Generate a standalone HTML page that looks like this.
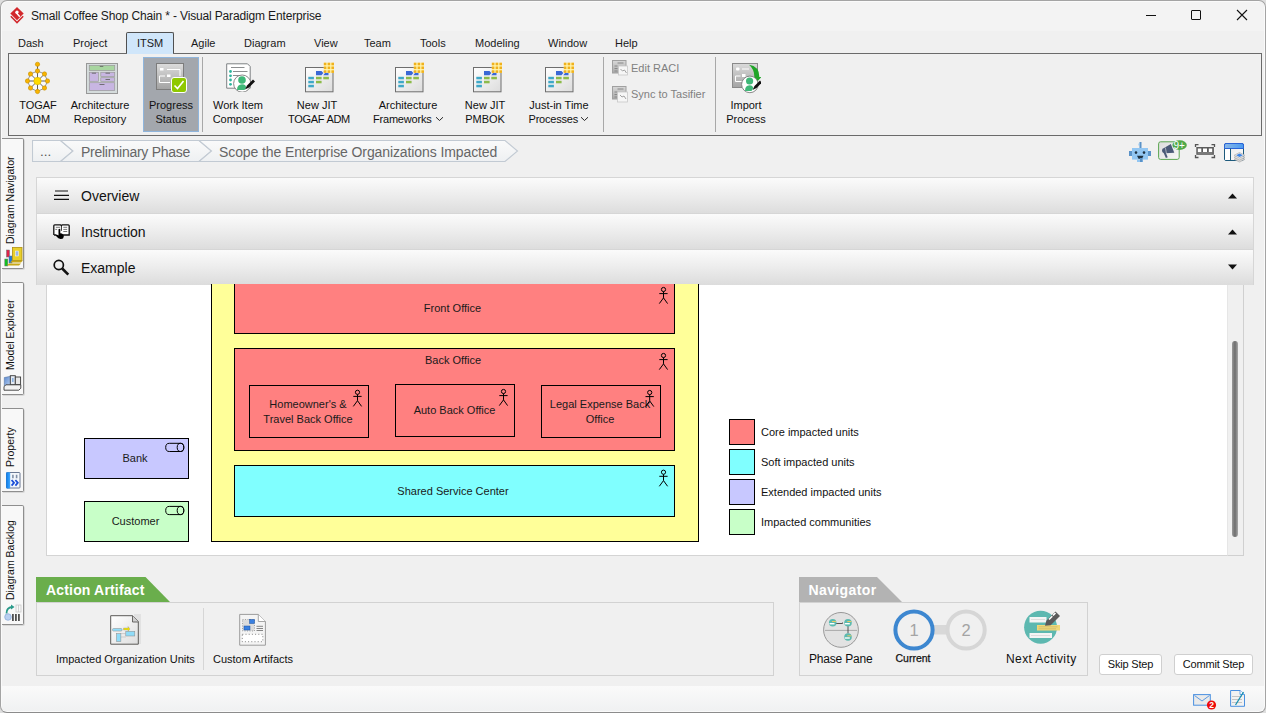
<!DOCTYPE html>
<html><head><meta charset="utf-8">
<style>
*{box-sizing:border-box;margin:0;padding:0}
html,body{width:1266px;height:713px;overflow:hidden;background:#dedede}
body{font-family:"Liberation Sans",sans-serif;font-size:11px;color:#000;position:relative}
.a{position:absolute}
.t{position:absolute;white-space:nowrap;line-height:14px}
.c{text-align:center}
#win{left:0;top:0;width:1266px;height:713px;background:#f0f0f0;border:1px solid #a4a4a4;border-bottom-color:#8c8c8c;border-radius:7px;box-shadow:inset 1px 1px 0 #fafafa,inset -1px -1px 0 #fafafa}
#title{left:2px;top:2px;width:1262px;height:29px;background:#f3f3f3;border-radius:6px 6px 0 0}
.menu{top:36px;font-size:11px;color:#1a1a1a}
.rl{font-size:11px;color:#111;text-align:center;line-height:14px}
.tab{left:2px;width:22px;background:#f8f8f8;border:1px solid #8e8e8e;border-left:none;border-radius:0 2px 2px 0;box-shadow:1px 1px 0 #d8d8d8}
.vt{position:absolute;left:2.5px;white-space:nowrap;font-size:10.5px;line-height:14px;color:#111;transform:rotate(-90deg);transform-origin:0 0}
.acc{left:36px;width:1218px;background:linear-gradient(#fbfbfb,#e9e9e9 60%,#dcdcdc);border-top:1px solid #d6d6d6;border-left:1px solid #d6d6d6;border-right:1px solid #d6d6d6}
.acct{left:81px;font-size:14px;color:#111;line-height:17px}
.box{position:absolute;border:1px solid #000}
.dt{position:absolute;font-size:11px;color:#1a1a1a;text-align:center;line-height:15px;white-space:nowrap}
.leg{position:absolute;left:729px;width:26px;height:26px;border:1px solid #000}
.legt{position:absolute;left:761px;font-size:11px;color:#111;white-space:nowrap;line-height:14px}
</style></head><body>
<div id="win" class="a"></div>
<div id="title" class="a"></div>
<!-- app icon -->
<svg class="a" style="left:0;top:0" width="40" height="30" viewBox="0 0 40 30">
<path d="M10.8 16.3 L17 22.6 L23.2 16.3" fill="none" stroke="#d2282c" stroke-width="1.5"/>
<path d="M17 7 L23.7 13.5 L17 20.2 L10.3 13.5 Z" fill="#d2282c"/>
<circle cx="17" cy="12.2" r="1.7" fill="#fff"/>
<path d="M16.2 12.6 L19.8 16.8" stroke="#fff" stroke-width="1.5"/>
<path d="M18.3 13.3 L20.5 12.8" stroke="#d2282c" stroke-width="1.2"/>
</svg>
<div class="t" style="left:31px;top:9px;font-size:12px;letter-spacing:-0.15px;color:#1a1a1a">Small Coffee Shop Chain * - Visual Paradigm Enterprise</div>
<!-- window controls -->
<div class="a" style="left:1146px;top:15px;width:10px;height:1px;background:#111"></div>
<div class="a" style="left:1191px;top:10px;width:10px;height:10px;border:1px solid #111;border-radius:1px"></div>
<svg class="a" style="left:1236px;top:9px" width="12" height="12" viewBox="0 0 12 12"><path d="M1 1 L11 11 M11 1 L1 11" stroke="#111" stroke-width="1.1"/></svg>

<!-- menu tabs -->
<div class="a" style="left:126px;top:32px;width:48px;height:22px;background:#d0e6fa;border:1px solid #505050;border-bottom:none;border-radius:2px 2px 0 0"></div>
<div class="t menu" style="left:18px">Dash</div>
<div class="t menu" style="left:73px">Project</div>
<div class="t menu" style="left:137px">ITSM</div>
<div class="t menu" style="left:191px">Agile</div>
<div class="t menu" style="left:244px">Diagram</div>
<div class="t menu" style="left:314px">View</div>
<div class="t menu" style="left:364px">Team</div>
<div class="t menu" style="left:420px">Tools</div>
<div class="t menu" style="left:475px">Modeling</div>
<div class="t menu" style="left:548px">Window</div>
<div class="t menu" style="left:615px">Help</div>

<!-- ribbon panel -->
<div class="a" style="left:8px;top:53px;width:1254px;height:83px;border:1px solid #6a6a6a;background:#f0f0f0"></div>
<div class="a" style="left:127px;top:53px;width:46px;height:1px;background:#d0e6fa"></div>
<!-- progress status highlight -->
<div class="a" style="left:143px;top:57px;width:56px;height:75px;background:#a3a7ad;border:1px solid #8fb5dc"></div>
<!-- separators -->
<div class="a" style="left:202px;top:57px;width:1px;height:75px;background:#a8a8a8"></div>
<div class="a" style="left:603px;top:57px;width:1px;height:75px;background:#a8a8a8"></div>
<div class="a" style="left:715px;top:57px;width:1px;height:75px;background:#a8a8a8"></div>

<!-- ribbon labels -->
<div class="t rl" style="left:12px;top:98px;width:52px">TOGAF<br>ADM</div>
<div class="t rl" style="left:68px;top:98px;width:64px">Architecture<br>Repository</div>
<div class="t rl" style="left:142px;top:98px;width:58px">Progress<br>Status</div>
<div class="t rl" style="left:206px;top:98px;width:64px">Work Item<br>Composer</div>
<div class="t rl" style="left:282px;top:98px;width:70px">New JIT</div>
<div class="t rl" style="left:284px;top:112px;width:70px;letter-spacing:-0.3px">TOGAF ADM</div>
<div class="t rl" style="left:370px;top:98px;width:76px">Architecture</div>
<div class="t" style="left:373px;top:112px;color:#111;letter-spacing:-0.2px">Frameworks</div>
<svg class="a" style="left:435px;top:116px" width="9" height="6"><path d="M1 1.2 L4.5 4.5 L8 1.2" stroke="#111" stroke-width="0.9" fill="none"/></svg>
<div class="t rl" style="left:455px;top:98px;width:60px">New JIT<br>PMBOK</div>
<div class="t rl" style="left:521px;top:98px;width:76px">Just-in Time</div>
<div class="t" style="left:528.5px;top:112px;color:#111;letter-spacing:-0.2px">Processes</div>
<svg class="a" style="left:580px;top:116px" width="9" height="6"><path d="M1 1.2 L4.5 4.5 L8 1.2" stroke="#111" stroke-width="0.9" fill="none"/></svg>
<div class="t" style="left:631px;top:61px;color:#808080">Edit RACI</div>
<div class="t" style="left:631px;top:87px;color:#808080">Sync to Tasifier</div>
<div class="t rl" style="left:721px;top:98px;width:50px">Import<br>Process</div>

<!-- RIBBON_ICONS -->
<!-- TOGAF ADM -->
<svg class="a" style="left:24px;top:61px" width="28" height="35" viewBox="24 61 28 35">
<g stroke="#505050" stroke-width="0.9" fill="none">
<path d="M37.5 64.5 V71"/>
<path d="M37.5 71 L44.5 74 L47.5 81 L44.5 88 L37.5 91.5 L30.5 88 L27.5 81 L30.5 74 Z" fill="#fafafa" stroke="#8a8a8a"/>
<path d="M37.5 81 L37.5 71 M37.5 81 L44.5 74 M37.5 81 L47.5 81 M37.5 81 L44.5 88 M37.5 81 L37.5 91.5 M37.5 81 L30.5 88 M37.5 81 L27.5 81 M37.5 81 L30.5 74"/>
</g>
<g fill="#f8b400" stroke="#c89000" stroke-width="0.6">
<circle cx="37.5" cy="64.3" r="2.15"/><circle cx="37.5" cy="71" r="2.15"/><circle cx="44.5" cy="74" r="2.15"/><circle cx="47.5" cy="81" r="2.15"/><circle cx="44.5" cy="88" r="2.15"/><circle cx="37.5" cy="91.5" r="2.15"/><circle cx="30.5" cy="88" r="2.15"/><circle cx="27.5" cy="81" r="2.15"/><circle cx="30.5" cy="74" r="2.15"/>
</g>
<circle cx="37.5" cy="81" r="3.7" fill="#ffdc00" stroke="#d8b000" stroke-width="0.6"/>
</svg>
<!-- Architecture Repository -->
<svg class="a" style="left:86px;top:63px" width="32" height="31" viewBox="0 0 32 31">
<rect x="0.5" y="0.5" width="31" height="30" fill="#d5dcdc" stroke="#989898"/>
<rect x="3.3" y="2.4" width="25.4" height="5" fill="#a8d6a0" stroke="#9a9a9a" stroke-width="0.7"/>
<rect x="3.3" y="9.3" width="9.2" height="9" fill="#c8b6e2" stroke="#9a9a9a" stroke-width="0.7"/>
<rect x="14.8" y="9.3" width="13.9" height="4.2" fill="#c8b6e2" stroke="#9a9a9a" stroke-width="0.7"/>
<rect x="14.8" y="14.7" width="13.9" height="3.6" fill="#c8b6e2" stroke="#9a9a9a" stroke-width="0.7"/>
<rect x="3.3" y="19.7" width="25.4" height="7.9" fill="#c8b6e2" stroke="#9a9a9a" stroke-width="0.7"/>
<g stroke="#5a5a5a" stroke-width="0.8"><path d="M13.8 3.4 h3.5 M5.8 10.2 h4.2 M19.5 10.2 h4.5 M19.5 16.5 h4.5 M13.5 21.5 h5"/></g>
</svg>
<!-- Progress Status -->
<svg class="a" style="left:155px;top:62px" width="34" height="32" viewBox="155 62 34 32">
<defs><linearGradient id="pg" x1="0" y1="0" x2="0" y2="1"><stop offset="0" stop-color="#dcdcdc"/><stop offset="1" stop-color="#a2a2a2"/></linearGradient></defs>
<rect x="156.5" y="63.5" width="27" height="26" fill="url(#pg)" stroke="#7c7c7c"/>
<rect x="160" y="68" width="3.5" height="2.5" fill="#fff"/>
<path d="M167 69.5 H180 V76" stroke="#fff" stroke-width="1" fill="none"/>
<rect x="167" y="74.5" width="3.5" height="2.5" fill="#fff"/>
<path d="M165 76 H159.5 V82.5 H170" stroke="#fff" stroke-width="1" fill="none"/>
<rect x="171.5" y="77.5" width="15" height="15" rx="2.5" fill="#8fc800" stroke="#fff" stroke-width="1"/>
<path d="M174.5 85.5 L177.5 88.5 L183.5 81" stroke="#fff" stroke-width="1.6" fill="none"/>
</svg>
<!-- Work Item Composer -->
<svg class="a" style="left:225px;top:62px" width="30" height="30" viewBox="225 62 30 30">
<path d="M226.7 63.8 H247.5 L250.2 66.5 V88.2 H226.7 Z" fill="#fff" stroke="#7e8284" stroke-width="1"/>
<path d="M231 67.5 H244.5 M233 71.5 H247.5 M233 75.5 H240" stroke="#6e7274" stroke-width="0.8"/>
<g fill="#2fb59e"><circle cx="230.5" cy="71.5" r="1.4"/><circle cx="230.5" cy="75.8" r="1.4"/><circle cx="230.5" cy="80" r="1.4"/><circle cx="230.5" cy="84.3" r="1.4"/></g>
<circle cx="242.2" cy="83.6" r="8.6" fill="#fff" stroke="#7a7a7a" stroke-width="0.9"/>
<circle cx="242" cy="80" r="3.8" fill="#3fb878"/>
<path d="M237 90 Q237 84.5 242 84.3 Q246.5 84.5 246 88 L244.5 90 Z" fill="#3fb878"/>
<path d="M245 89.5 L247 85.5 L253 79.5 L255 81.5 L249 87.5 Z" fill="#111"/>
</svg>
<svg class="a" style="left:304px;top:62px" width="32" height="31" viewBox="-1 -5 32 31">
<defs><linearGradient id="jg305" x1="0" y1="0" x2="1" y2="1"><stop offset="0" stop-color="#fff"/><stop offset="1" stop-color="#dcdcdc"/></linearGradient></defs>
<rect x="0.5" y="0.5" width="27.5" height="24.3" fill="url(#jg305)" stroke="#6e6e6e"/>
<path d="M11 3.9 H16.5 L18.3 6.1 L16.5 8.3 H11 Z" fill="#3a68d6"/>
<path d="M18.5 3.9 H23.5 V8.3 H18.3 L20 6.1 Z" fill="#3a68d6"/>
<rect x="11" y="9.8" width="5.6" height="2.5" fill="#8dbb4a"/><rect x="18.3" y="9.8" width="5.6" height="2.5" fill="#8dbb4a"/>
<rect x="11" y="13.8" width="5.6" height="2.5" fill="#8dbb4a"/>
<rect x="3.3" y="9.8" width="5.6" height="2.5" fill="#3ea8c8"/><rect x="3.3" y="13.8" width="5.6" height="2.5" fill="#3ea8c8"/><rect x="3.3" y="17.8" width="5.6" height="2.5" fill="#3ea8c8"/>
<rect x="18.8" y="-4.3" width="10.2" height="10.2" fill="#fff6b0"/>
<g fill="#f0b11e"><rect x="18.8" y="-4.3" width="2.6" height="2.6"/><rect x="22.6" y="-4.3" width="2.6" height="2.6"/><rect x="26.4" y="-4.3" width="2.6" height="2.6"/>
<rect x="18.8" y="-0.5" width="2.6" height="2.6"/><rect x="22.6" y="-0.5" width="2.6" height="2.6"/><rect x="26.4" y="-0.5" width="2.6" height="2.6"/>
<rect x="18.8" y="3.3" width="2.6" height="2.6"/><rect x="22.6" y="3.3" width="2.6" height="2.6"/><rect x="26.4" y="3.3" width="2.6" height="2.6"/></g>
</svg>
<svg class="a" style="left:394px;top:62px" width="32" height="31" viewBox="-1 -5 32 31">
<defs><linearGradient id="jg395" x1="0" y1="0" x2="1" y2="1"><stop offset="0" stop-color="#fff"/><stop offset="1" stop-color="#dcdcdc"/></linearGradient></defs>
<rect x="0.5" y="0.5" width="27.5" height="24.3" fill="url(#jg395)" stroke="#6e6e6e"/>
<path d="M11 3.9 H16.5 L18.3 6.1 L16.5 8.3 H11 Z" fill="#3a68d6"/>
<path d="M18.5 3.9 H23.5 V8.3 H18.3 L20 6.1 Z" fill="#3a68d6"/>
<rect x="11" y="9.8" width="5.6" height="2.5" fill="#8dbb4a"/><rect x="18.3" y="9.8" width="5.6" height="2.5" fill="#8dbb4a"/>
<rect x="11" y="13.8" width="5.6" height="2.5" fill="#8dbb4a"/>
<rect x="3.3" y="9.8" width="5.6" height="2.5" fill="#3ea8c8"/><rect x="3.3" y="13.8" width="5.6" height="2.5" fill="#3ea8c8"/><rect x="3.3" y="17.8" width="5.6" height="2.5" fill="#3ea8c8"/>
<rect x="18.8" y="-4.3" width="10.2" height="10.2" fill="#fff6b0"/>
<g fill="#f0b11e"><rect x="18.8" y="-4.3" width="2.6" height="2.6"/><rect x="22.6" y="-4.3" width="2.6" height="2.6"/><rect x="26.4" y="-4.3" width="2.6" height="2.6"/>
<rect x="18.8" y="-0.5" width="2.6" height="2.6"/><rect x="22.6" y="-0.5" width="2.6" height="2.6"/><rect x="26.4" y="-0.5" width="2.6" height="2.6"/>
<rect x="18.8" y="3.3" width="2.6" height="2.6"/><rect x="22.6" y="3.3" width="2.6" height="2.6"/><rect x="26.4" y="3.3" width="2.6" height="2.6"/></g>
</svg>
<svg class="a" style="left:472px;top:62px" width="32" height="31" viewBox="-1 -5 32 31">
<defs><linearGradient id="jg473" x1="0" y1="0" x2="1" y2="1"><stop offset="0" stop-color="#fff"/><stop offset="1" stop-color="#dcdcdc"/></linearGradient></defs>
<rect x="0.5" y="0.5" width="27.5" height="24.3" fill="url(#jg473)" stroke="#6e6e6e"/>
<path d="M11 3.9 H16.5 L18.3 6.1 L16.5 8.3 H11 Z" fill="#3a68d6"/>
<path d="M18.5 3.9 H23.5 V8.3 H18.3 L20 6.1 Z" fill="#3a68d6"/>
<rect x="11" y="9.8" width="5.6" height="2.5" fill="#8dbb4a"/><rect x="18.3" y="9.8" width="5.6" height="2.5" fill="#8dbb4a"/>
<rect x="11" y="13.8" width="5.6" height="2.5" fill="#8dbb4a"/>
<rect x="3.3" y="9.8" width="5.6" height="2.5" fill="#3ea8c8"/><rect x="3.3" y="13.8" width="5.6" height="2.5" fill="#3ea8c8"/><rect x="3.3" y="17.8" width="5.6" height="2.5" fill="#3ea8c8"/>
<rect x="18.8" y="-4.3" width="10.2" height="10.2" fill="#fff6b0"/>
<g fill="#f0b11e"><rect x="18.8" y="-4.3" width="2.6" height="2.6"/><rect x="22.6" y="-4.3" width="2.6" height="2.6"/><rect x="26.4" y="-4.3" width="2.6" height="2.6"/>
<rect x="18.8" y="-0.5" width="2.6" height="2.6"/><rect x="22.6" y="-0.5" width="2.6" height="2.6"/><rect x="26.4" y="-0.5" width="2.6" height="2.6"/>
<rect x="18.8" y="3.3" width="2.6" height="2.6"/><rect x="22.6" y="3.3" width="2.6" height="2.6"/><rect x="26.4" y="3.3" width="2.6" height="2.6"/></g>
</svg>
<svg class="a" style="left:544px;top:62px" width="32" height="31" viewBox="-1 -5 32 31">
<defs><linearGradient id="jg545" x1="0" y1="0" x2="1" y2="1"><stop offset="0" stop-color="#fff"/><stop offset="1" stop-color="#dcdcdc"/></linearGradient></defs>
<rect x="0.5" y="0.5" width="27.5" height="24.3" fill="url(#jg545)" stroke="#6e6e6e"/>
<path d="M11 3.9 H16.5 L18.3 6.1 L16.5 8.3 H11 Z" fill="#3a68d6"/>
<path d="M18.5 3.9 H23.5 V8.3 H18.3 L20 6.1 Z" fill="#3a68d6"/>
<rect x="11" y="9.8" width="5.6" height="2.5" fill="#8dbb4a"/><rect x="18.3" y="9.8" width="5.6" height="2.5" fill="#8dbb4a"/>
<rect x="11" y="13.8" width="5.6" height="2.5" fill="#8dbb4a"/>
<rect x="3.3" y="9.8" width="5.6" height="2.5" fill="#3ea8c8"/><rect x="3.3" y="13.8" width="5.6" height="2.5" fill="#3ea8c8"/><rect x="3.3" y="17.8" width="5.6" height="2.5" fill="#3ea8c8"/>
<rect x="18.8" y="-4.3" width="10.2" height="10.2" fill="#fff6b0"/>
<g fill="#f0b11e"><rect x="18.8" y="-4.3" width="2.6" height="2.6"/><rect x="22.6" y="-4.3" width="2.6" height="2.6"/><rect x="26.4" y="-4.3" width="2.6" height="2.6"/>
<rect x="18.8" y="-0.5" width="2.6" height="2.6"/><rect x="22.6" y="-0.5" width="2.6" height="2.6"/><rect x="26.4" y="-0.5" width="2.6" height="2.6"/>
<rect x="18.8" y="3.3" width="2.6" height="2.6"/><rect x="22.6" y="3.3" width="2.6" height="2.6"/><rect x="26.4" y="3.3" width="2.6" height="2.6"/></g>
</svg>
<svg class="a" style="left:612px;top:60px" width="17" height="17" viewBox="0 0 17 17">
<defs><linearGradient id="rg59" x1="0" y1="0" x2="0" y2="1"><stop offset="0" stop-color="#d8d8d8"/><stop offset="1" stop-color="#a8a8a8"/></linearGradient></defs>
<rect x="0.5" y="0.5" width="13.5" height="12.5" fill="url(#rg59)" stroke="#a0a0a0"/>
<path d="M5.5 3 h6 M2.5 6 h3 M2.5 8.5 h3 M2.5 11 h3" stroke="#888" stroke-width="1"/>
<rect x="6.5" y="6" width="9" height="9" fill="#f6f6f6" stroke="#c8c8c8" stroke-width="0.8"/>
<path d="M8.5 9 l2 2 l2 -1 l2 3" stroke="#999" stroke-width="0.9" fill="none"/>
</svg>
<svg class="a" style="left:612px;top:86px" width="17" height="17" viewBox="0 0 17 17">
<defs><linearGradient id="rg85" x1="0" y1="0" x2="0" y2="1"><stop offset="0" stop-color="#d8d8d8"/><stop offset="1" stop-color="#a8a8a8"/></linearGradient></defs>
<rect x="0.5" y="0.5" width="13.5" height="12.5" fill="url(#rg85)" stroke="#a0a0a0"/>
<path d="M5.5 3 h6 M2.5 6 h3 M2.5 8.5 h3 M2.5 11 h3" stroke="#888" stroke-width="1"/>
<rect x="5.5" y="6" width="10" height="10" fill="#f6f6f6" stroke="#c8c8c8" stroke-width="0.8"/>
<path d="M8 9 l2 2 l2 -1 l2 3" stroke="#999" stroke-width="0.9" fill="none"/>
</svg>
<svg class="a" style="left:731px;top:62px" width="30" height="32" viewBox="731 62 30 32">
<defs><linearGradient id="ig" x1="0" y1="0" x2="0" y2="1"><stop offset="0" stop-color="#dadada"/><stop offset="1" stop-color="#a4a4a4"/></linearGradient></defs>
<rect x="732.5" y="63.5" width="25" height="24" fill="url(#ig)" stroke="#8a8a8a"/>
<rect x="736" y="67.5" width="3.5" height="3" rx="1" fill="#fff"/>
<path d="M742 69 H749" stroke="#fff" stroke-width="1"/>
<rect x="742" y="74" width="3.5" height="3" fill="#fff"/>
<path d="M740.5 76 H735.5 V81.5 H745" stroke="#fff" stroke-width="1" fill="none"/>
<path d="M749 64.8 Q759.5 66.5 759.3 77 L761.5 77 L756.6 82.3 L751.5 77 L754.3 77 Q754.5 69.5 749 64.8 Z" fill="#1fa528"/>
<circle cx="749.9" cy="84.4" r="8.3" fill="#fff" stroke="#7a7a7a" stroke-width="0.9"/>
<circle cx="749.6" cy="81" r="3.6" fill="#3fb878"/>
<path d="M745 91 Q745 85.5 749.5 85.3 Q753.5 85.5 753 88.5 L751.5 91 Z" fill="#3fb878"/>
<path d="M752.5 90 L754.5 86 L760 80.5 L762 82.5 L756.5 88 Z" fill="#111"/>
</svg>

<!-- side tabs -->
<div class="a tab" style="top:138px;height:131px"></div>
<div class="a tab" style="top:282px;height:113px"></div>
<div class="a tab" style="top:408px;height:84px"></div>
<div class="a tab" style="top:505px;height:120px"></div>
<div class="vt" style="top:244px">Diagram Navigator</div>
<div class="vt" style="top:370px">Model Explorer</div>
<div class="vt" style="top:467px">Property</div>
<div class="vt" style="top:600px">Diagram Backlog</div>
<!-- DN icon -->
<svg class="a" style="left:4px;top:247px" width="19" height="20" viewBox="0 0 19 20">
<rect x="2.5" y="3" width="3" height="7" fill="#e0204a" stroke="#707070" stroke-width="0.5"/>
<rect x="5" y="9" width="3" height="7" fill="#1a7ae0" stroke="#707070" stroke-width="0.5"/>
<rect x="0.8" y="12" width="3" height="7" fill="#10c020" stroke="#707070" stroke-width="0.5"/>
<path d="M3 18.5 H15 L17 16.5 H5 Z" fill="#c8a818"/>
<path d="M6 15.5 H17 L19 13.5 H8 Z" fill="#c8a818"/>
<rect x="8.5" y="0.5" width="9.5" height="13" fill="#e8cf2a" stroke="#b09010" stroke-width="0.8"/>
<rect x="11.5" y="4" width="3" height="5" fill="#9cb8e8" stroke="#fff" stroke-width="0.5"/>
</svg>
<!-- ME icon -->
<svg class="a" style="left:3px;top:375px" width="19" height="16" viewBox="0 0 19 16">
<defs><linearGradient id="meg" x1="0" y1="0" x2="1" y2="1"><stop offset="0" stop-color="#5a88d0"/><stop offset="1" stop-color="#b8d0f0"/></linearGradient></defs>
<path d="M1.3 2.5 L7.5 1.3 V10.3 L1.3 11 Z" fill="url(#meg)" stroke="#4a6a98" stroke-width="0.5"/>
<rect x="7.3" y="0.7" width="5" height="9" fill="#e4eaf2" stroke="#3a3a3a" stroke-width="0.9"/>
<rect x="9" y="3" width="1.6" height="4" fill="#8ab0e0"/>
<rect x="12.3" y="2" width="5.3" height="7.5" fill="#e8e8e8" stroke="#3a3a3a" stroke-width="0.9"/>
<path d="M1 11.8 L2.8 9.8 H17.8 V13.2 L15.8 15.2 H1 Z" fill="#f2f2f2" stroke="#3a3a3a" stroke-width="0.9"/>
</svg>
<!-- Property icon -->
<svg class="a" style="left:6px;top:472px" width="15" height="17" viewBox="0 0 15 17">
<defs><linearGradient id="pbg" x1="0" y1="0" x2="1" y2="0"><stop offset="0" stop-color="#0a7ae8"/><stop offset="1" stop-color="#40a8ff"/></linearGradient></defs>
<rect x="0.5" y="0.5" width="13.5" height="15.5" rx="0.8" fill="#f4f7fb" stroke="#5a6a88" stroke-width="0.9"/>
<rect x="0.2" y="0.2" width="4" height="16.3" rx="0.8" fill="url(#pbg)"/>
<path d="M6.9 2.8 V6.3 M10.6 2.8 V6.3" stroke="#8090a8" stroke-width="1.6"/>
<path d="M5.6 8 L8 10.8 L5.6 13.6 M9.4 8 L11.8 10.8 L9.4 13.6" stroke="#1a4ed8" stroke-width="1.8" fill="none"/>
</svg>
<!-- Backlog icon -->
<svg class="a" style="left:4px;top:604px" width="18" height="18" viewBox="0 0 18 18">
<path d="M2.5 9.5 Q2.5 3.5 8 3" stroke="#2a9a8a" stroke-width="1.8" fill="none"/>
<path d="M7 0.5 L10.5 3 L7 5.5 Z" fill="#2a9a8a"/>
<circle cx="4" cy="13" r="3.3" fill="#b8cff0" stroke="#88a8d8" stroke-width="0.7"/>
<rect x="12" y="1" width="5" height="7" fill="none" stroke="#c8c8c8" stroke-width="0.8"/>
<path d="M14.5 1 V8" stroke="#c8c8c8" stroke-width="0.8"/>
<rect x="8" y="10" width="1.8" height="7" fill="#505050"/><rect x="11" y="10" width="1.8" height="7" fill="#505050"/><rect x="14" y="10" width="1.8" height="7" fill="#505050"/>
</svg>

<!-- breadcrumb -->
<svg class="a" style="left:32px;top:140px" width="490" height="22" viewBox="0 0 490 22"><defs><linearGradient id="bcg" x1="0" y1="0" x2="0" y2="1"><stop offset="0" stop-color="#fafafa"/><stop offset="1" stop-color="#eef0f2"/></linearGradient></defs>
<path d="M0.5 0.5 H28.5 L41 11 L28.5 21.5 H0.5 Z" fill="url(#bcg)" stroke="#c2cad3" stroke-width="1.1"/>
<path d="M28.5 0.5 H167 L179.5 11 L167 21.5 H28.5 L41 11 Z" fill="url(#bcg)" stroke="#c2cad3" stroke-width="1.1"/>
<path d="M167 0.5 H473 L485.5 11 L473 21.5 H167 L179.5 11 Z" fill="url(#bcg)" stroke="#c2cad3" stroke-width="1.1"/>
</svg>
<div class="t" style="left:40px;top:144px;font-size:13.5px;color:#555;line-height:16px">...</div>
<div class="t" style="left:81px;top:144px;font-size:14px;color:#666;line-height:16px;letter-spacing:-0.27px">Preliminary Phase</div>
<div class="t" style="left:219px;top:144px;font-size:14px;color:#666;line-height:16px;letter-spacing:-0.1px">Scope the Enterprise Organizations Impacted</div>
<!-- TOP_RIGHT_ICONS -->
<svg class="a" style="left:1128px;top:141px" width="24" height="22" viewBox="1128 141 24 22">
<rect x="1139.5" y="142" width="2" height="6" fill="#5a92c8"/>
<rect x="1138.5" y="143.5" width="1.5" height="2" fill="#90c4f0"/>
<rect x="1129" y="151" width="3" height="5" fill="#5a92c8"/>
<rect x="1148" y="151" width="3" height="5" fill="#5a92c8"/>
<rect x="1132" y="148" width="16" height="11.6" fill="#92c6f2"/>
<circle cx="1136" cy="152.6" r="1.3" fill="#1e3040"/><circle cx="1144" cy="152.6" r="1.3" fill="#1e3040"/>
<path d="M1137 155.8 H1143.5 L1142 158.8 H1138.5 Z" fill="#1e3040"/>
<rect x="1137" y="159.6" width="6" height="2.4" fill="#92c6f2"/>
<rect x="1140" y="158" width="2.5" height="4" fill="#5a92c8"/>
</svg>
<svg class="a" style="left:1157px;top:139px" width="32" height="23" viewBox="1157 139 32 23">
<defs><linearGradient id="mg" x1="0" y1="0" x2="1" y2="1"><stop offset="0" stop-color="#dcdcdc"/><stop offset="1" stop-color="#f8f8f8"/></linearGradient></defs>
<rect x="1158.6" y="141.8" width="20.6" height="17.6" rx="2" fill="url(#mg)" stroke="#5aa650" stroke-width="1"/>
<path d="M1162 150.2 Q1162 148.2 1164 147.9 L1170.8 144 L1174.3 152.8 L1165 153.3 Q1162 153.2 1162 150.2 Z" fill="#4b5a78"/>
<path d="M1164.6 152.5 L1166.8 157.7" stroke="#4b5a78" stroke-width="2"/>
<path d="M1165.4 147.6 L1166.4 153.3" stroke="#e4e4e4" stroke-width="0.6"/>
<ellipse cx="1179.6" cy="145.1" rx="7.2" ry="4.9" fill="#4fa84a"/>
<text x="1173.4" y="148.9" font-family="Liberation Sans" font-size="10" fill="#fff">9+</text>
</svg>
<svg class="a" style="left:1194px;top:143px" width="23" height="17" viewBox="1194 143 23 17">
<path d="M1195.5 147 V144.6 H1198.5 M1211.5 144.6 H1214.5 V147 M1195.5 155 V157.5 H1198.5 M1211.5 157.5 H1214.5 V155" stroke="#555" stroke-width="1.3" fill="none"/>
<rect x="1196.3" y="147" width="17.6" height="7.8" fill="#5c5c5c"/>
<rect x="1197.8" y="148.5" width="3.5" height="3.5" fill="#fff"/><rect x="1203" y="148.5" width="4" height="3.5" fill="#fff"/><rect x="1208.8" y="148.5" width="3.4" height="3.5" fill="#fff"/>
<path d="M1197.5 153 H1212.5" stroke="#aaa" stroke-width="0.8"/>
</svg>
<svg class="a" style="left:1223px;top:142px" width="23" height="21" viewBox="1223 142 23 21">
<defs><linearGradient id="lg1" x1="0" y1="0" x2="1" y2="0"><stop offset="0" stop-color="#8ab8e8"/><stop offset="1" stop-color="#4a9af0"/></linearGradient>
<linearGradient id="lg2" x1="0" y1="0" x2="1" y2="1"><stop offset="0" stop-color="#e8e8e8"/><stop offset="1" stop-color="#fafafa"/></linearGradient></defs>
<rect x="1224.5" y="143.5" width="19" height="17" rx="1.5" fill="url(#lg2)" stroke="#1d5a7c" stroke-width="1"/>
<path d="M1224.5 148.5 V145 Q1224.5 143.5 1226 143.5 H1242 Q1243.5 143.5 1243.5 145 V148.5 Z" fill="url(#lg1)" stroke="#2a64d8" stroke-width="1"/>
<rect x="1225" y="149" width="5" height="11" fill="#fff"/>
<path d="M1230.5 148.5 V160.5" stroke="#1d5a7c" stroke-width="1"/>
<path d="M1234 159.3 L1239.5 156.5 L1245 159.3 L1239.5 162.1 Z" fill="#d4d4d4" stroke="#a8a8a8" stroke-width="0.6"/>
<path d="M1234 157.3 L1239.5 154.5 L1245 157.3 L1239.5 160.1 Z" fill="#e0e0e0" stroke="#a8a8a8" stroke-width="0.6"/>
<path d="M1234 155.3 L1239.5 152.5 L1245 155.3 L1239.5 158.1 Z" fill="#e8e8e8" stroke="#a8a8a8" stroke-width="0.6"/>
<path d="M1236.2 155.3 L1239.5 153.6 L1242.8 155.3 L1239.5 157 Z" fill="#3d86e8"/>
</svg>

<!-- accordion -->
<div class="a acc" style="top:177px;height:37px"></div>
<div class="a acc" style="top:213px;height:37px"></div>
<div class="a acc" style="top:249px;height:36px"></div>
<div class="t acct" style="top:188px">Overview</div>
<div class="t acct" style="top:224px">Instruction</div>
<div class="t acct" style="top:260px">Example</div>
<svg class="a" style="left:1228px;top:193px" width="10" height="6"><path d="M0 5.5 L4.5 0.5 L9 5.5 Z" fill="#111"/></svg>
<svg class="a" style="left:1228px;top:229px" width="10" height="6"><path d="M0 5.5 L4.5 0.5 L9 5.5 Z" fill="#111"/></svg>
<svg class="a" style="left:1228px;top:264px" width="10" height="6"><path d="M0 0.5 L4.5 5.5 L9 0.5 Z" fill="#111"/></svg>
<!-- ACC_ICONS -->
<svg class="a" style="left:53px;top:189px" width="17" height="12"><path d="M2 2 H15 M1 6.4 H16 M1 10.4 H16" stroke="#111" stroke-width="1.1"/></svg>
<svg class="a" style="left:50px;top:220px" width="24" height="22" viewBox="50 220 24 22">
<path d="M53.8 235 V225.8 Q53.8 224.8 54.8 224.8 H60.5 L61.4 225.6 L62.3 224.8 H68.2 Q69.2 224.8 69.2 225.8 V235 H62.8" fill="#fff" stroke="#111" stroke-width="1.3"/>
<path d="M54 235 H56" stroke="#111" stroke-width="1.3"/>
<path d="M61.4 225.5 V230.8" stroke="#111" stroke-width="0.9"/>
<path d="M55.8 227.3 H60 M55.3 229.4 H57.2 M63.3 227.3 H67.2 M63.3 229.4 H67.2 M63.3 231.5 H67.2" stroke="#555" stroke-width="0.8"/>
<path d="M58.5 229.3 Q59.4 228.4 60.3 229.3 V233.2 Q63.8 233.6 63.8 236.5 Q63.6 239.3 60.5 239 Q58.2 238.8 56.5 236.5 L55.5 235 Q56.2 234.2 57.2 234.8 L58.5 235.6 Z" fill="#000"/>
</svg>
<svg class="a" style="left:52px;top:258px" width="19" height="19" viewBox="0 0 19 19"><circle cx="6.8" cy="7" r="4.6" fill="none" stroke="#111" stroke-width="1.7"/><path d="M10.2 10.5 L16.3 16.6" stroke="#111" stroke-width="2.6"/></svg>

<!-- diagram area -->
<div class="a" style="left:46px;top:285px;width:1198px;height:271px;background:#fff;border:1px solid #d4d4d4;border-top:none"></div>
<div class="a" style="left:1227px;top:285px;width:17px;height:271px;background:#f0f0f0;border-left:1px solid #e6e6e6;border-right:1px solid #d0d0d0;border-bottom:1px solid #d0d0d0"></div>
<div class="a" style="left:1232px;top:341px;width:6px;height:196px;border-radius:3px;background:linear-gradient(90deg,#9a9a9a,#6e6e6e 50%,#a8a8a8)"></div>

<!-- DIAGRAM -->
<div class="box" style="left:211px;top:284px;width:488px;height:258px;background:#ffff99;border-top:none"></div>
<div class="box" style="left:234px;top:284px;width:441px;height:50px;background:#ff8080;border-top:none"></div>
<div class="box" style="left:234px;top:348px;width:441px;height:103px;background:#ff8080"></div>
<div class="box" style="left:249px;top:385px;width:120px;height:53px;background:#ff8080"></div>
<div class="box" style="left:395px;top:384px;width:120px;height:53px;background:#ff8080"></div>
<div class="box" style="left:541px;top:385px;width:120px;height:53px;background:#ff8080"></div>
<div class="box" style="left:234px;top:465px;width:441px;height:52px;background:#80ffff"></div>
<div class="box" style="left:84px;top:438px;width:105px;height:41px;background:#c8c8ff"></div>
<div class="box" style="left:84px;top:501px;width:105px;height:41px;background:#c8ffc8"></div>

<div class="dt" style="left:232px;top:301px;width:441px">Front Office</div>
<div class="dt" style="left:232.5px;top:353px;width:441px">Back Office</div>
<div class="dt" style="left:248px;top:397px;width:120px">Homeowner's &amp;<br>Travel Back Office</div>
<div class="dt" style="left:394.5px;top:403px;width:120px">Auto Back Office</div>
<div class="dt" style="left:540px;top:397px;width:120px">Legal Expense Back<br>Office</div>
<div class="dt" style="left:232.5px;top:484px;width:441px">Shared Service Center</div>
<div class="dt" style="left:82.5px;top:451px;width:105px">Bank</div>
<div class="dt" style="left:83px;top:514px;width:105px">Customer</div>
<!-- ACTORS -->
<svg class="a" style="left:0;top:0" width="1266" height="713" viewBox="0 0 1266 713"><g fill="none" stroke="#000" stroke-width="1"><circle cx="663.5" cy="289.5" r="2.1"/><path d="M663.5 291.6 V297.9 M659.3 293.6 H667.6 M663.5 297.9 L659.3 303.6 M663.5 297.9 L667.6 303.6"/><circle cx="663.5" cy="355.5" r="2.1"/><path d="M663.5 357.6 V363.9 M659.3 359.6 H667.6 M663.5 363.9 L659.3 369.6 M663.5 363.9 L667.6 369.6"/><circle cx="357.5" cy="392.3" r="2.1"/><path d="M357.5 394.40000000000003 V400.7 M353.3 396.40000000000003 H361.6 M357.5 400.7 L353.3 406.40000000000003 M357.5 400.7 L361.6 406.40000000000003"/><circle cx="503.5" cy="391.5" r="2.1"/><path d="M503.5 393.6 V399.9 M499.3 395.6 H507.6 M503.5 399.9 L499.3 405.6 M503.5 399.9 L507.6 405.6"/><circle cx="649.7" cy="392.5" r="2.1"/><path d="M649.7 394.6 V400.9 M645.5 396.6 H653.8000000000001 M649.7 400.9 L645.5 406.6 M649.7 400.9 L653.8000000000001 406.6"/><circle cx="663.5" cy="472.2" r="2.1"/><path d="M663.5 474.3 V480.59999999999997 M659.3 476.3 H667.6 M663.5 480.59999999999997 L659.3 486.3 M663.5 480.59999999999997 L667.6 486.3"/><path d="M169.3 443.29999999999995 H180.5 A3.3 4.1 0 0 1 180.5 451.5 H169.3 A3.6 4.1 0 0 1 169.3 443.29999999999995 Z"/><ellipse cx="180.5" cy="447.4" rx="3.3" ry="4.1"/><path d="M169.3 506.4 H180.5 A3.3 4.1 0 0 1 180.5 514.6 H169.3 A3.6 4.1 0 0 1 169.3 506.4 Z"/><ellipse cx="180.5" cy="510.5" rx="3.3" ry="4.1"/></g></svg>

<!-- legend -->
<div class="leg" style="top:419px;background:#ff8080"></div>
<div class="leg" style="top:449px;background:#80ffff"></div>
<div class="leg" style="top:479px;background:#c8c8ff"></div>
<div class="leg" style="top:509px;background:#c8ffc8"></div>
<div class="legt" style="top:425px">Core impacted units</div>
<div class="legt" style="top:455px">Soft impacted units</div>
<div class="legt" style="top:485px">Extended impacted units</div>
<div class="legt" style="top:515px">Impacted communities</div>

<!-- action artifact -->
<div class="a" style="left:36px;top:602px;width:738px;height:74px;border:1px solid #d2d2d2"></div>
<svg class="a" style="left:36px;top:577px" width="135" height="26"><path d="M0 0 H109.5 L134 25 H0 Z" fill="#6aae4c"/></svg>
<div class="t" style="left:46px;top:582px;font-size:14px;font-weight:bold;color:#fff;line-height:16px;letter-spacing:0.17px">Action Artifact</div>
<div class="a" style="left:203px;top:608px;width:1px;height:62px;background:#d6d6d6"></div>
<div class="t" style="left:56px;top:652px;font-size:11px;color:#111">Impacted Organization Units</div>
<div class="t" style="left:213px;top:652px;font-size:11px;color:#111">Custom Artifacts</div>

<!-- navigator -->
<div class="a" style="left:799px;top:602px;width:289px;height:74px;border:1px solid #d2d2d2"></div>
<svg class="a" style="left:799px;top:577px" width="104" height="26"><path d="M0 0 H78 L103 25 H0 Z" fill="#b3b3b3"/></svg>
<div class="t" style="left:808.5px;top:582px;font-size:14px;font-weight:bold;color:#fff;line-height:16px;letter-spacing:0.38px">Navigator</div>
<div class="t" style="left:809px;top:652px;font-size:12px;color:#111;letter-spacing:-0.2px">Phase Pane</div>
<div class="t" style="left:895.5px;top:651px;font-size:10.5px;color:#111;-webkit-text-stroke:0.25px #111">Current</div>
<div class="t" style="left:1006px;top:652px;font-size:12px;color:#111;letter-spacing:0.4px">Next Activity</div>
<!-- NAV_ICONS -->

<!-- buttons -->
<div class="a" style="left:1099px;top:654px;width:63px;height:21px;background:#fff;border:1px solid #cfcfcf;border-radius:3px"></div>
<div class="a" style="left:1174px;top:654px;width:79px;height:21px;background:#fff;border:1px solid #cfcfcf;border-radius:3px"></div>
<div class="t c" style="left:1099px;top:657px;width:63px;color:#111;letter-spacing:-0.2px">Skip Step</div>
<div class="t c" style="left:1174px;top:657px;width:79px;color:#111;letter-spacing:-0.2px">Commit Step</div>

<!-- status bar -->
<div class="a" style="left:2px;top:686px;width:1262px;height:25px;background:linear-gradient(#fafafa,#f0f1f2);border-radius:0 0 6px 6px"></div>
<!-- STATUS_ICONS -->
<svg class="a" style="left:0;top:0" width="1266" height="713" viewBox="0 0 1266 713">
<defs><linearGradient id="dg1" x1="0" y1="0" x2="1" y2="1"><stop offset="0" stop-color="#fff"/><stop offset="1" stop-color="#dedede"/></linearGradient></defs>
<rect x="134" y="614" width="7" height="30" fill="#d8d8d8" opacity="0.6"/>
<path d="M110.7 615.7 H132.5 L138.3 621.5 V644.2 H110.7 Z" fill="url(#dg1)" stroke="#5c5a58" stroke-width="1"/>
<path d="M132.5 615.7 V622 H138.3" fill="#d0d0d0" stroke="#5c5a58" stroke-width="0.9"/>
<rect x="112.5" y="628.5" width="9.5" height="2.6" rx="1" fill="#90dcf8" stroke="#8a8a8a" stroke-width="0.5"/>
<path d="M123.5 628 H128 V626.5 L130 629 L128 631.5 V630 H123.5 Z" fill="#f0e000" stroke="#999" stroke-width="0.4"/>
<rect x="116.5" y="633.6" width="4.4" height="8" fill="#90dcf8" stroke="#8a8a8a" stroke-width="0.5"/>
<rect x="125.8" y="631.3" width="9" height="4.7" fill="#90dcf8" stroke="#8a8a8a" stroke-width="0.5"/>
<path d="M120.9 633.6 H125.8 M120.9 637 H125.8" stroke="#aaa" stroke-width="0.5"/>

<path d="M239.7 614.4 H258.3 L265.4 621.5 V645.2 H239.7 Z" fill="#f4f4f4" stroke="#9c9c9c" stroke-width="1"/>
<path d="M258.3 614.4 V621.5 H265.4" fill="#fff" stroke="#9c9c9c" stroke-width="0.9"/>
<rect x="242.5" y="619.5" width="12" height="11.5" fill="#dcdcdc" stroke="#777" stroke-width="0.6" stroke-dasharray="1 1.5"/>
<rect x="249.5" y="619.5" width="5" height="4" fill="#3a80e0" stroke="#1a50a0" stroke-width="0.5"/>
<rect x="244" y="626" width="6" height="4" fill="#3a80e0" stroke="#1a50a0" stroke-width="0.5"/>
<path d="M256.5 626.3 H263 M256.5 628.5 H263 M256.5 630.5 H263" stroke="#555" stroke-width="0.7"/>
<rect x="242.3" y="634.3" width="20.5" height="7.4" fill="#fff" stroke="#555" stroke-width="0.7" stroke-dasharray="1 2.2"/>

<!-- phase pane -->
<circle cx="841" cy="629.9" r="17.4" fill="#e2e2e2" stroke="#8e8e8e" stroke-width="0.9"/>
<path d="M825 630.4 H857" stroke="#999" stroke-width="0.8"/>
<path d="M836 623.5 H842.5 V622.5 M848 626 V633.5" stroke="#444" stroke-width="0.9" fill="none"/>
<g fill="#5cbab0"><circle cx="832.7" cy="622.7" r="3.8"/><circle cx="848" cy="622.7" r="3.8"/><circle cx="848" cy="637" r="3.8"/></g>
<g fill="#fff"><rect x="829.5" y="623" width="5" height="1.4"/><rect x="844.8" y="623" width="5" height="1.4"/><rect x="844.8" y="637.3" width="5" height="1.4"/></g>
<g fill="#e8c860"><rect x="832" y="621" width="4" height="1"/><rect x="847.3" y="621" width="4" height="1"/><rect x="847.3" y="635.3" width="4" height="1"/></g>

<!-- steps -->
<rect x="934" y="625" width="13" height="9.5" fill="#d8d8d8"/>
<circle cx="966.1" cy="630" r="18.6" fill="#f0f0f0" stroke="#d6d6d6" stroke-width="4"/>
<circle cx="914" cy="630" r="18.6" fill="#f0f0f0" stroke="#3d87d0" stroke-width="4"/>
<text x="914" y="636.3" font-family="Liberation Sans" font-size="16.5" fill="#a4a4a4" text-anchor="middle">1</text>
<text x="966" y="636.3" font-family="Liberation Sans" font-size="16.5" fill="#a4a4a4" text-anchor="middle">2</text>

<!-- next activity -->
<circle cx="1040.6" cy="627.2" r="16.5" fill="#5db8b0"/>
<rect x="1029.5" y="617" width="17" height="5.5" fill="#f4f4f4"/>
<rect x="1029.5" y="633" width="22.5" height="5" fill="#f4f4f4"/>
<path d="M1031 619.5 H1045 M1031 635.5 H1050" stroke="#ccc" stroke-width="0.6"/>
<rect x="1037" y="625" width="23" height="5.5" fill="#f0d878"/>
<path d="M1038.5 626.8 H1057.5 M1038.5 628.8 H1056" stroke="#b8a860" stroke-width="0.5"/>
<path d="M1045 625.8 L1046.3 620.8 L1055.5 611.5 L1060 616 L1050.7 625.2 Z" fill="#5a5a5a"/>
<path d="M1049 619.5 L1052.3 616.2 M1053 615.5 L1055.5 613" stroke="#fff" stroke-width="1.6"/>
<!-- status icons -->
<rect x="1193.6" y="694.6" width="16.7" height="10.6" fill="#eaeaea" stroke="#4a90e0" stroke-width="1"/>
<path d="M1194.5 695.5 L1202 701 L1209.5 695.5" stroke="#4a90e0" stroke-width="0.9" fill="none"/>
<circle cx="1211.5" cy="705" r="4.6" fill="#ee0a0a"/>
<text x="1211.5" y="708.3" font-family="Liberation Sans" font-size="8.5" font-weight="bold" fill="#fff" text-anchor="middle">2</text>
<path d="M1230.6 690.5 H1240 L1244.5 694.5 V706.3 H1230.6 Z" fill="#f2f2f2" stroke="#4a90e0" stroke-width="1"/>
<path d="M1240 690.5 V694.5 H1244.5" fill="#fff" stroke="#4a90e0" stroke-width="0.8"/>
<path d="M1232 696.5 H1242 M1232 699.5 H1242 M1232 702.5 H1242" stroke="#c4c4c4" stroke-width="1.2"/>
<path d="M1235.5 705 L1243.5 692" stroke="#1890b0" stroke-width="1.3"/>
</svg>

</body></html>
